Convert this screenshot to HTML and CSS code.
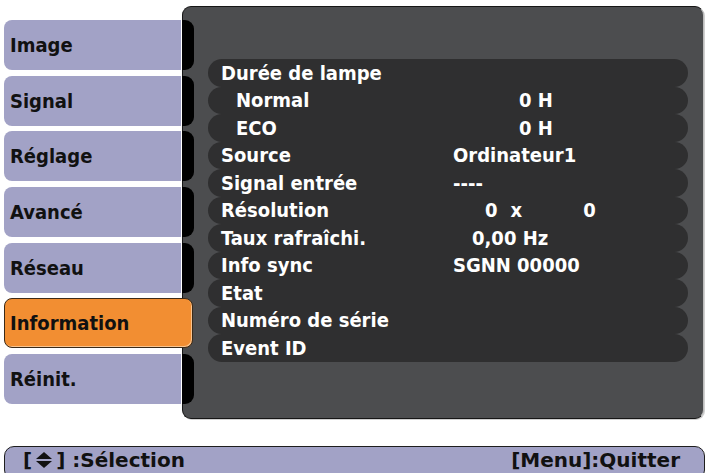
FILE: index.html
```html
<html>

<head>
    <link rel="stylesheet" href="styles.css">
</head>

<body>
    <div class="screen">
        <ul class="menu">
            <li class="tab">Image</li>
            <li class="tab">Signal</li>
            <li class="tab">Réglage</li>
            <li class="tab">Avancé</li>
            <li class="tab">Réseau</li>
            <li class="tab active">Information</li>
            <li class="tab">Réinit.</li>
        </ul>
        <div class="panel">
            <ul class="info-list">
                <li class="row"><span>Durée de lampe</span><span></span></li>
                <li class="row sub"><span>Normal</span><span class="val hours">0 H</span></li>
                <li class="row sub"><span>ECO</span><span class="val hours">0 H</span></li>
                <li class="row"><span>Source</span><span class="val">Ordinateur1</span></li>
                <li class="row"><span>Signal entrée</span><span class="val">----</span></li>
                <li class="row"><span>Résolution</span><span class="val res"><b>0</b><b class="x">x</b><b class="h">0</b></span></li>
                <li class="row"><span>Taux rafraîchi.</span><span class="val rate">0,00 Hz</span></li>
                <li class="row"><span>Info sync</span><span class="val">SGNN 00000</span></li>
                <li class="row"><span>Etat</span><span></span></li>
                <li class="row"><span>Numéro de série</span><span></span></li>
                <li class="row"><span>Event ID</span><span></span></li>
            </ul>
        </div>
    </div>
    <div class="help-bar">
        <span class="key">[<svg class="updown" width="18" height="16" viewBox="0 0 18 16"><polygon points="1,7 9,0 17,7" /><polygon points="1,9 9,16 17,9" /></svg>] :Sélection</span>
        <span class="key">[Menu]:Quitter</span>
    </div>
</body>

</html>
```

FILE: styles.css
```css
body {
    margin: 0;
    padding: 0 4px;
    background: #ffffff;
    font-family: "DejaVu Sans", Verdana, sans-serif;
    font-weight: bold;
    font-stretch: condensed;
    overflow: hidden;
}

.screen {
    display: flex;
    align-items: flex-start;
    padding-top: 6px;
}

/* left menu tabs */
.menu {
    list-style: none;
    margin: 14px 0 0 0;
    padding: 0;
    width: 177px;
    display: flex;
    flex-direction: column;
    gap: 5.7px;
    position: relative;
    z-index: 2;
}

.tab {
    position: relative;
    height: 50px;
    display: flex;
    align-items: center;
    padding-left: 6px;
    border-radius: 8px 0 0 8px;
    background: #a2a2c6;
    color: #111111;
    font-size: 20px;
}

.tab::after {
    content: "";
    position: absolute;
    left: calc(100% + 1px);
    top: 0;
    bottom: 0;
    width: 12px;
    background: #000000;
    border-radius: 0 9px 9px 0;
}

.tab.active {
    margin-right: -12px;
    height: 48px;
    padding-left: 5px;
    border: 1px solid #3b2a18;
    border-radius: 8px;
    background: #f28e32;
    box-shadow: inset -1px -1px 0 #f9c490;
}

.tab.active::after {
    display: none;
}

/* information panel */
.panel {
    margin-left: 1px;
    padding: 52px 15px 0 25px;
    box-sizing: border-box;
    width: 522px;
    height: 413px;
    border: 1px solid #161616;
    border-right-color: #bdbdbd;
    border-radius: 9px;
    background: #4c4d4f;
    box-shadow: 1px 1px 0 #d0d0d0;
}

.info-list {
    list-style: none;
    margin: 0;
    padding: 0;
}

.row {
    height: 27.5px;
    display: grid;
    grid-template-columns: 232px 1fr;
    align-items: center;
    padding-left: 13px;
    border-radius: 14px;
    background: #2f2f30;
    color: #ffffff;
    font-size: 20px;
    white-space: nowrap;
}

.row.sub span:first-child {
    padding-left: 15px;
}

.val.hours {
    padding-left: 66px;
}

.val.rate {
    padding-left: 19px;
}

.val.res b {
    font-weight: bold;
}

.val.res b:first-child {
    padding-left: 32px;
}

.val.res .x {
    padding-left: 13px;
}

.val.res .h {
    padding-left: 61px;
}

/* bottom help bar */
.help-bar {
    margin-top: 27px;
    height: 30px;
    display: flex;
    justify-content: space-between;
    align-items: flex-start;
    padding: 2px 24px 0 18px;
    border: 1px solid #1e1e1e;
    border-radius: 10px;
    background: #a2a2c6;
    color: #111111;
    font-size: 20px;
    font-stretch: normal;
    line-height: 22px;
}

.key {
    display: flex;
    align-items: center;
    white-space: pre;
}

.updown {
    margin: 0 3px;
    fill: #111111;
}
```
